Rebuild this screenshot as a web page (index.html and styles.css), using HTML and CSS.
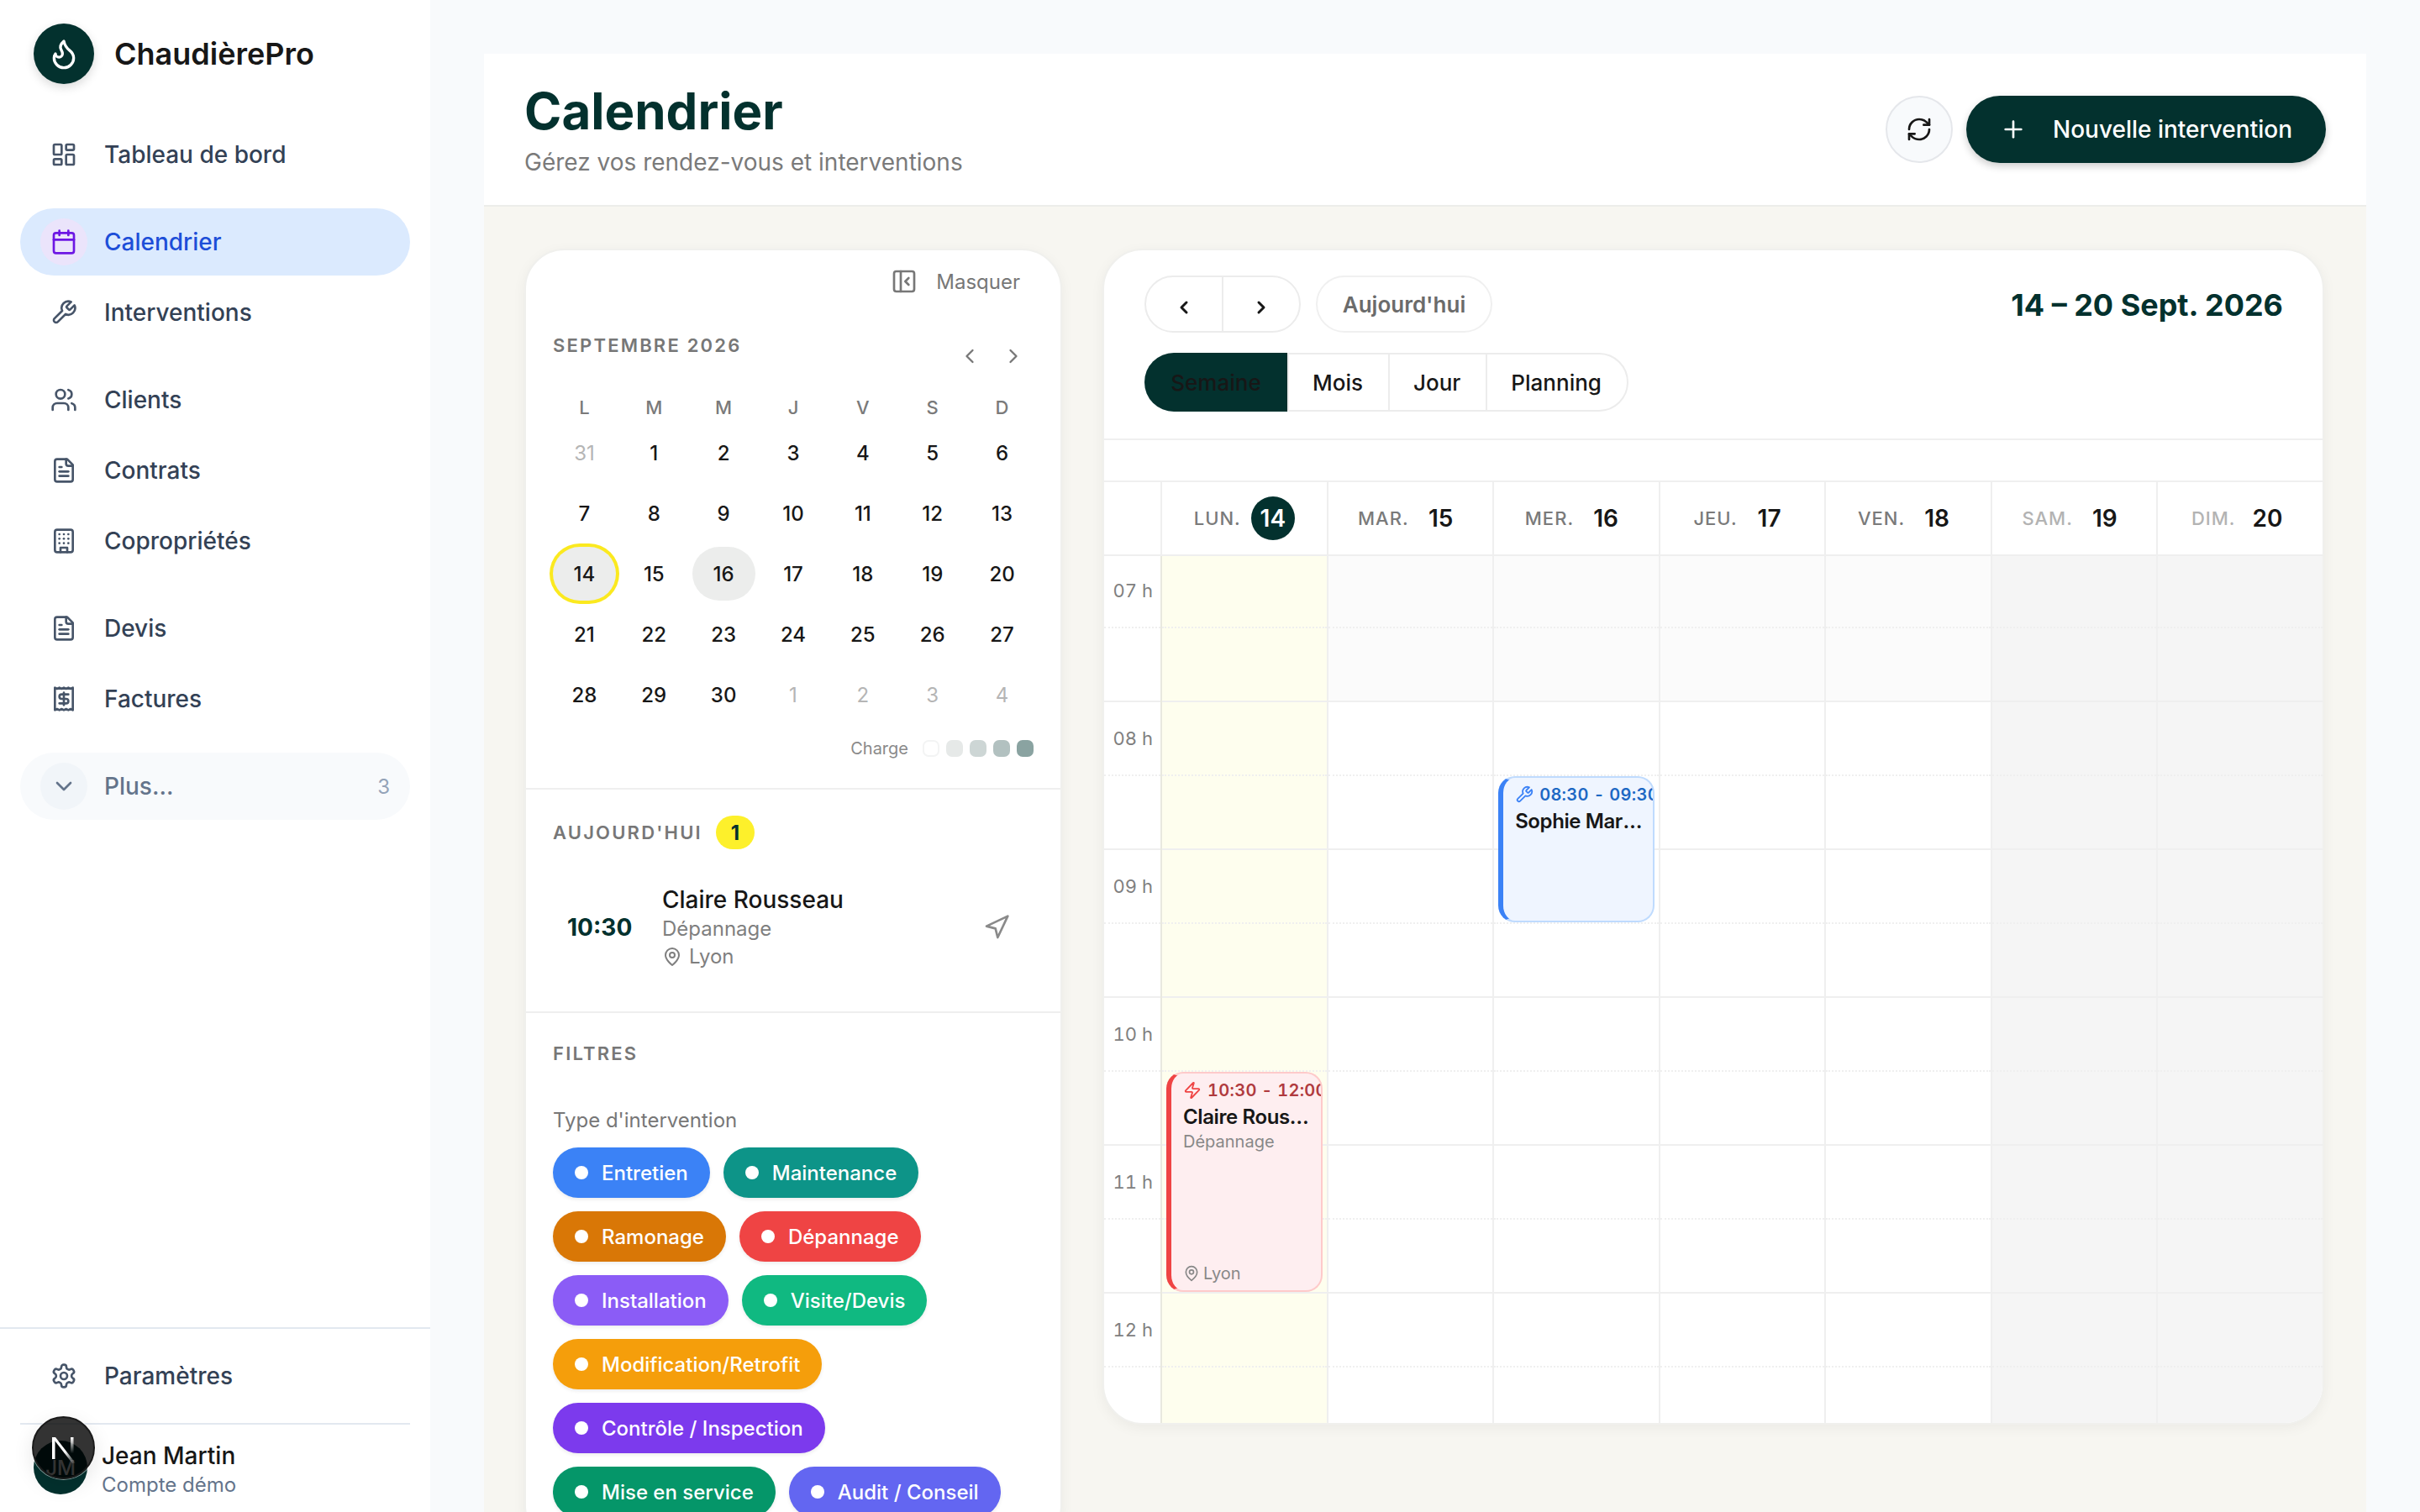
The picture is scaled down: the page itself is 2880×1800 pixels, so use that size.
FILE: index.html
```html
<!DOCTYPE html>
<html lang="fr">
<head>
    <meta charset="UTF-8">
    <title>Calendrier - ChaudièrePro</title>
    <link rel="stylesheet" href="styles.css">
</head>
<body>
    <!-- Icon set -->
    <svg class="sprite" xmlns="http://www.w3.org/2000/svg">
        <symbol id="i-flame" viewBox="0 0 24 24"><path d="M8.5 14.5A2.5 2.5 0 0 0 11 12c0-1.38-.5-2-1-3-1.072-2.143-.224-4.054 2-6 .5 2.5 2 4.9 4 6.5 2 1.6 3 3.5 3 5.5a7 7 0 1 1-14 0c0-1.153.433-2.294 1-3a2.5 2.5 0 0 0 2.5 2.5z"/></symbol>
        <symbol id="i-dashboard" viewBox="0 0 24 24"><rect width="7" height="9" x="3" y="3" rx="1"/><rect width="7" height="5" x="14" y="3" rx="1"/><rect width="7" height="9" x="14" y="12" rx="1"/><rect width="7" height="5" x="3" y="16" rx="1"/></symbol>
        <symbol id="i-calendar" viewBox="0 0 24 24"><path d="M8 2v4"/><path d="M16 2v4"/><rect width="18" height="18" x="3" y="4" rx="2"/><path d="M3 10h18"/></symbol>
        <symbol id="i-wrench" viewBox="0 0 24 24"><path d="M14.7 6.3a1 1 0 0 0 0 1.4l1.6 1.6a1 1 0 0 0 1.4 0l3.77-3.77a6 6 0 0 1-7.94 7.94l-6.91 6.91a2.12 2.12 0 0 1-3-3l6.91-6.91a6 6 0 0 1 7.94-7.94l-3.76 3.76z"/></symbol>
        <symbol id="i-users" viewBox="0 0 24 24"><path d="M16 21v-2a4 4 0 0 0-4-4H6a4 4 0 0 0-4 4v2"/><circle cx="9" cy="7" r="4"/><path d="M22 21v-2a4 4 0 0 0-3-3.87"/><path d="M16 3.13a4 4 0 0 1 0 7.75"/></symbol>
        <symbol id="i-file" viewBox="0 0 24 24"><path d="M15 2H6a2 2 0 0 0-2 2v16a2 2 0 0 0 2 2h12a2 2 0 0 0 2-2V7Z"/><path d="M14 2v4a2 2 0 0 0 2 2h4"/><path d="M10 9H8"/><path d="M16 13H8"/><path d="M16 17H8"/></symbol>
        <symbol id="i-building" viewBox="0 0 24 24"><rect width="16" height="20" x="4" y="2" rx="2"/><path d="M9 22v-4h6v4"/><path d="M8 6h.01"/><path d="M16 6h.01"/><path d="M12 6h.01"/><path d="M12 10h.01"/><path d="M12 14h.01"/><path d="M16 10h.01"/><path d="M16 14h.01"/><path d="M8 10h.01"/><path d="M8 14h.01"/></symbol>
        <symbol id="i-receipt" viewBox="0 0 24 24"><path d="M4 2v20l2-1 2 1 2-1 2 1 2-1 2 1 2-1 2 1V2l-2 1-2-1-2 1-2-1-2 1-2-1-2 1Z"/><path d="M16 8h-6a2 2 0 1 0 0 4h4a2 2 0 1 1 0 4H8"/><path d="M12 17.5v-11"/></symbol>
        <symbol id="i-chevron-down" viewBox="0 0 24 24"><path d="m6 9 6 6 6-6"/></symbol>
        <symbol id="i-chevron-left" viewBox="0 0 24 24"><path d="m15 18-6-6 6-6"/></symbol>
        <symbol id="i-chevron-right" viewBox="0 0 24 24"><path d="m9 18 6-6-6-6"/></symbol>
        <symbol id="i-settings" viewBox="0 0 24 24"><path d="M12.22 2h-.44a2 2 0 0 0-2 2v.18a2 2 0 0 1-1 1.73l-.43.25a2 2 0 0 1-2 0l-.15-.08a2 2 0 0 0-2.73.73l-.22.38a2 2 0 0 0 .73 2.73l.15.1a2 2 0 0 1 1 1.72v.51a2 2 0 0 1-1 1.74l-.15.09a2 2 0 0 0-.73 2.73l.22.38a2 2 0 0 0 2.73.73l.15-.08a2 2 0 0 1 2 0l.43.25a2 2 0 0 1 1 1.73V20a2 2 0 0 0 2 2h.44a2 2 0 0 0 2-2v-.18a2 2 0 0 1 1-1.73l.43-.25a2 2 0 0 1 2 0l.15.08a2 2 0 0 0 2.73-.73l.22-.39a2 2 0 0 0-.73-2.73l-.15-.08a2 2 0 0 1-1-1.74v-.5a2 2 0 0 1 1-1.74l.15-.09a2 2 0 0 0 .73-2.73l-.22-.38a2 2 0 0 0-2.73-.73l-.15.08a2 2 0 0 1-2 0l-.43-.25a2 2 0 0 1-1-1.73V4a2 2 0 0 0-2-2z"/><circle cx="12" cy="12" r="3"/></symbol>
        <symbol id="i-panel" viewBox="0 0 24 24"><rect width="18" height="18" x="3" y="3" rx="2"/><path d="M9 3v18"/><path d="m16 15-3-3 3-3"/></symbol>
        <symbol id="i-refresh" viewBox="0 0 24 24"><path d="M3 12a9 9 0 0 1 9-9 9.75 9.75 0 0 1 6.74 2.74L21 8"/><path d="M21 3v5h-5"/><path d="M21 12a9 9 0 0 1-9 9 9.75 9.75 0 0 1-6.74-2.74L3 16"/><path d="M8 16H3v5"/></symbol>
        <symbol id="i-plus" viewBox="0 0 24 24"><path d="M5 12h14"/><path d="M12 5v14"/></symbol>
        <symbol id="i-pin" viewBox="0 0 24 24"><path d="M20 10c0 6-8 12-8 12s-8-6-8-12a8 8 0 0 1 16 0Z"/><circle cx="12" cy="10" r="3"/></symbol>
        <symbol id="i-navigation" viewBox="0 0 24 24"><polygon points="3 11 22 2 13 21 11 13 3 11"/></symbol>
        <symbol id="i-zap" viewBox="0 0 24 24"><path d="M4 14a1 1 0 0 1-.78-1.63l9.9-10.2a.5.5 0 0 1 .86.46l-1.92 6.02A1 1 0 0 0 13 10h7a1 1 0 0 1 .78 1.63l-9.9 10.2a.5.5 0 0 1-.86-.46l1.92-6.02A1 1 0 0 0 11 14z"/></symbol>
    </svg>

    <aside class="sidebar">
        <div class="brand">
            <span class="brand-logo"><svg class="icon"><use href="#i-flame"/></svg></span>
            <span class="brand-name">ChaudièrePro</span>
        </div>

        <nav class="nav">
            <div class="nav-group">
                <a class="nav-item"><span class="nav-icon"><svg class="icon"><use href="#i-dashboard"/></svg></span>Tableau de bord</a>
            </div>
            <div class="nav-group">
                <a class="nav-item active"><span class="nav-icon"><svg class="icon"><use href="#i-calendar"/></svg></span>Calendrier</a>
                <a class="nav-item"><span class="nav-icon"><svg class="icon"><use href="#i-wrench"/></svg></span>Interventions</a>
            </div>
            <div class="nav-group">
                <a class="nav-item"><span class="nav-icon"><svg class="icon"><use href="#i-users"/></svg></span>Clients</a>
                <a class="nav-item"><span class="nav-icon"><svg class="icon"><use href="#i-file"/></svg></span>Contrats</a>
                <a class="nav-item"><span class="nav-icon"><svg class="icon"><use href="#i-building"/></svg></span>Copropriétés</a>
            </div>
            <div class="nav-group">
                <a class="nav-item"><span class="nav-icon"><svg class="icon"><use href="#i-file"/></svg></span>Devis</a>
                <a class="nav-item"><span class="nav-icon"><svg class="icon"><use href="#i-receipt"/></svg></span>Factures</a>
            </div>
            <div class="nav-group">
                <a class="nav-item more"><span class="nav-icon"><svg class="icon"><use href="#i-chevron-down"/></svg></span>Plus...<span class="more-count">3</span></a>
            </div>
        </nav>

        <div class="sidebar-footer">
            <a class="nav-item"><span class="nav-icon"><svg class="icon"><use href="#i-settings"/></svg></span>Paramètres</a>
            <div class="user">
                <span class="avatar">JM</span>
                <div>
                    <div class="user-name">Jean Martin</div>
                    <div class="user-role">Compte démo</div>
                </div>
            </div>
        </div>
    </aside>

    <!-- Dev indicator sitting over the avatar -->
    <div class="dev-badge">
        <svg width="44" height="44" viewBox="0 0 44 44" fill="none">
            <defs>
                <linearGradient id="fade-a" x1="0" y1="0" x2="1" y2="1"><stop offset="0.55" stop-color="#fff"/><stop offset="1" stop-color="#fff" stop-opacity="0"/></linearGradient>
                <linearGradient id="fade-b" x1="0" y1="0" x2="0" y2="1"><stop offset="0" stop-color="#fff"/><stop offset="0.8" stop-color="#fff" stop-opacity="0"/></linearGradient>
            </defs>
            <rect x="8" y="9" width="3.5" height="26" fill="#fff"/>
            <polygon points="8,9 12,9 36,40 32,40" fill="url(#fade-a)"/>
            <rect x="30" y="9" width="3.5" height="24" fill="url(#fade-b)"/>
        </svg>
    </div>

    <main class="main">
        <header class="page-header">
            <div>
                <h1 class="page-title">Calendrier</h1>
                <p class="page-sub">Gérez vos rendez-vous et interventions</p>
            </div>
            <div class="header-actions">
                <button class="btn-refresh"><svg class="icon"><use href="#i-refresh"/></svg></button>
                <button class="btn-new"><svg class="icon"><use href="#i-plus"/></svg>Nouvelle intervention</button>
            </div>
        </header>

        <div class="page-body">
            <section class="side-panel">
                <div class="panel-section mini-cal">
                    <div class="hide-row"><svg class="icon"><use href="#i-panel"/></svg>Masquer</div>
                    <div class="month-row">
                        <span class="section-label">SEPTEMBRE 2026</span>
                        <span class="month-arrows">
                            <button><svg class="icon"><use href="#i-chevron-left"/></svg></button>
                            <button><svg class="icon"><use href="#i-chevron-right"/></svg></button>
                        </span>
                    </div>
                    <div class="week-letters">
                        <span>L</span><span>M</span><span>M</span><span>J</span><span>V</span><span>S</span><span>D</span>
                    </div>
                    <div class="days">
                        <span class="day off">31</span><span class="day">1</span><span class="day">2</span><span class="day">3</span><span class="day">4</span><span class="day">5</span><span class="day">6</span>
                        <span class="day">7</span><span class="day">8</span><span class="day">9</span><span class="day">10</span><span class="day">11</span><span class="day">12</span><span class="day">13</span>
                        <span class="day today">14</span><span class="day">15</span><span class="day busy">16</span><span class="day">17</span><span class="day">18</span><span class="day">19</span><span class="day">20</span>
                        <span class="day">21</span><span class="day">22</span><span class="day">23</span><span class="day">24</span><span class="day">25</span><span class="day">26</span><span class="day">27</span>
                        <span class="day">28</span><span class="day">29</span><span class="day">30</span><span class="day off">1</span><span class="day off">2</span><span class="day off">3</span><span class="day off">4</span>
                    </div>
                    <div class="legend">
                        <span class="legend-label">Charge</span>
                        <i class="load load-0"></i><i class="load load-1"></i><i class="load load-2"></i><i class="load load-3"></i><i class="load load-4"></i>
                    </div>
                </div>

                <div class="panel-section today-box">
                    <div class="today-head">
                        <span class="section-label">AUJOURD'HUI</span>
                        <span class="today-count">1</span>
                    </div>
                    <div class="today-item">
                        <span class="today-time">10:30</span>
                        <div class="today-info">
                            <div class="today-name">Claire Rousseau</div>
                            <div class="today-type">Dépannage</div>
                            <div class="today-place"><svg class="icon"><use href="#i-pin"/></svg>Lyon</div>
                        </div>
                        <svg class="icon today-go"><use href="#i-navigation"/></svg>
                    </div>
                </div>

                <div class="panel-section filters">
                    <div class="section-label">FILTRES</div>
                    <div class="filter-title">Type d'intervention</div>
                    <div class="pills">
                        <span class="pill entretien">Entretien</span>
                        <span class="pill maintenance">Maintenance</span>
                        <span class="pill ramonage">Ramonage</span>
                        <span class="pill depannage">Dépannage</span>
                        <span class="pill installation">Installation</span>
                        <span class="pill visite">Visite/Devis</span>
                        <span class="pill modification">Modification/Retrofit</span>
                        <span class="pill controle">Contrôle / Inspection</span>
                        <span class="pill service">Mise en service</span>
                        <span class="pill audit">Audit / Conseil</span>
                    </div>
                </div>
            </section>

            <section class="week-panel">
                <div class="toolbar">
                    <div class="toolbar-left">
                        <div class="toolbar-row">
                            <div class="arrows">
                                <button><svg class="icon"><use href="#i-chevron-left"/></svg></button>
                                <button><svg class="icon"><use href="#i-chevron-right"/></svg></button>
                            </div>
                            <button class="btn-today">Aujourd'hui</button>
                        </div>
                        <div class="view-tabs">
                            <button class="tab current">Semaine</button>
                            <button class="tab">Mois</button>
                            <button class="tab">Jour</button>
                            <button class="tab">Planning</button>
                        </div>
                    </div>
                    <div class="range">14 – 20 Sept. 2026</div>
                </div>
                <div class="all-day"></div>

                <div class="week-head">
                    <div class="head-cell"></div>
                    <div class="head-cell"><span class="head-day">LUN.</span><span class="head-num now">14</span></div>
                    <div class="head-cell"><span class="head-day">MAR.</span><span class="head-num">15</span></div>
                    <div class="head-cell"><span class="head-day">MER.</span><span class="head-num">16</span></div>
                    <div class="head-cell"><span class="head-day">JEU.</span><span class="head-num">17</span></div>
                    <div class="head-cell"><span class="head-day">VEN.</span><span class="head-num">18</span></div>
                    <div class="head-cell weekend"><span class="head-day">SAM.</span><span class="head-num">19</span></div>
                    <div class="head-cell weekend"><span class="head-day">DIM.</span><span class="head-num">20</span></div>
                </div>

                <div class="week-body">
                    <div class="hours">
                        <div class="slot hour">07 h</div>
                        <div class="slot hour">08 h</div>
                        <div class="slot hour">09 h</div>
                        <div class="slot hour">10 h</div>
                        <div class="slot hour">11 h</div>
                        <div class="slot hour">12 h</div>
                    </div>

                    <div class="day-col today-col">
                        <div class="slot"></div><div class="slot"></div><div class="slot"></div><div class="slot"></div><div class="slot"></div><div class="slot"></div>
                        <div class="event event-red">
                            <div class="event-time"><svg class="icon"><use href="#i-zap"/></svg>10:30 - 12:00</div>
                            <div class="event-name">Claire Rousseau</div>
                            <div class="event-type">Dépannage</div>
                            <div class="event-place"><svg class="icon"><use href="#i-pin"/></svg>Lyon</div>
                        </div>
                    </div>
                    <div class="day-col">
                        <div class="slot past"></div><div class="slot"></div><div class="slot"></div><div class="slot"></div><div class="slot"></div><div class="slot"></div>
                    </div>
                    <div class="day-col">
                        <div class="slot past"></div><div class="slot"></div><div class="slot"></div><div class="slot"></div><div class="slot"></div><div class="slot"></div>
                        <div class="event event-blue">
                            <div class="event-time"><svg class="icon"><use href="#i-wrench"/></svg>08:30 - 09:30</div>
                            <div class="event-name">Sophie Martin</div>
                        </div>
                    </div>
                    <div class="day-col">
                        <div class="slot past"></div><div class="slot"></div><div class="slot"></div><div class="slot"></div><div class="slot"></div><div class="slot"></div>
                    </div>
                    <div class="day-col">
                        <div class="slot past"></div><div class="slot"></div><div class="slot"></div><div class="slot"></div><div class="slot"></div><div class="slot"></div>
                    </div>
                    <div class="day-col weekend-col">
                        <div class="slot"></div><div class="slot"></div><div class="slot"></div><div class="slot"></div><div class="slot"></div><div class="slot"></div>
                    </div>
                    <div class="day-col weekend-col">
                        <div class="slot"></div><div class="slot"></div><div class="slot"></div><div class="slot"></div><div class="slot"></div><div class="slot"></div>
                    </div>
                </div>
            </section>
        </div>
    </main>
</body>
</html>
```

FILE: styles.css
```css
/* Page frame */
* {
    box-sizing: border-box;
}

body {
    margin: 0;
    height: 100vh;
    display: flex;
    overflow: hidden;
    font-family: 'Inter', 'Liberation Sans', sans-serif;
    color: #171717;
    background-color: #f8fafc;
}

button {
    font-family: inherit;
    background: none;
    border: none;
    padding: 0;
}

.sprite {
    display: none;
}

.icon {
    width: 32px;
    height: 32px;
    flex-shrink: 0;
    fill: none;
    stroke: currentColor;
    stroke-width: 2;
    stroke-linecap: round;
    stroke-linejoin: round;
}

/* Sidebar */
.sidebar {
    width: 512px;
    flex-shrink: 0;
    display: flex;
    flex-direction: column;
    background-color: #fff;
}

.brand {
    height: 144px;
    padding: 28px 0 0 40px;
    display: flex;
    align-items: flex-start;
    gap: 24px;
}

.brand-logo {
    width: 72px;
    height: 72px;
    border-radius: 50%;
    display: flex;
    align-items: center;
    justify-content: center;
    color: #fff;
    background-color: #03312e;
    box-shadow: 0 4px 12px rgba(0, 0, 0, 0.15);
}

.brand-logo .icon {
    width: 40px;
    height: 40px;
}

.brand-name {
    line-height: 72px;
    font-size: 36px;
    font-weight: 600;
    color: #171717;
}

.nav {
    flex: 1;
    padding: 0 24px;
    display: flex;
    flex-direction: column;
    gap: 24px;
}

.nav-group {
    display: flex;
    flex-direction: column;
    gap: 4px;
}

.nav-item {
    height: 80px;
    padding-left: 24px;
    padding-right: 24px;
    display: flex;
    align-items: center;
    gap: 20px;
    border-radius: 40px;
    font-size: 28px;
    font-weight: 500;
    color: #334155;
}

.nav-icon {
    width: 56px;
    height: 56px;
    border-radius: 50%;
    display: flex;
    align-items: center;
    justify-content: center;
    color: #475569;
}

.nav-item.active {
    background-color: #dbeafe;
    color: #1d4ed8;
}

.nav-item.active .nav-icon {
    background-color: #ebe4fb;
    color: #6d16e4;
}

.nav-item.more {
    background-color: #f8fafc;
    color: #64748b;
}

.nav-item.more .nav-icon {
    background-color: #f1f5f9;
    color: #64748b;
}

.more-count {
    margin-left: auto;
    font-size: 24px;
    font-weight: 400;
    color: #94a3b8;
}

.sidebar-footer {
    padding: 16px 24px 0;
    position: relative;
}

.sidebar-footer::before {
    content: "";
    position: absolute;
    left: 0;
    right: 0;
    top: -2px;
    height: 2px;
    background-color: #e2e8f0;
}

.user {
    height: 106px;
    margin-top: 16px;
    padding: 19px 0 0 16px;
    display: flex;
    align-items: flex-start;
    gap: 17px;
    border-top: 2px solid #e2e8f0;
}

.avatar {
    width: 64px;
    height: 64px;
    border-radius: 50%;
    display: flex;
    align-items: center;
    justify-content: center;
    font-size: 24px;
    font-weight: 500;
    color: #fff;
    background-color: #03312e;
}

.user-name {
    line-height: 36px;
    font-size: 28px;
    font-weight: 500;
    color: #171717;
}

.user-role {
    line-height: 34px;
    font-size: 24px;
    color: #64748b;
}

.dev-badge {
    position: absolute;
    left: 38px;
    top: 1686px;
    width: 75px;
    height: 75px;
    border-radius: 50%;
    display: flex;
    align-items: center;
    justify-content: center;
    background-color: rgba(0, 0, 0, 0.8);
    border: 2px solid #1a1a1a;
    box-shadow: 0 0 0 1px rgba(255, 255, 255, 0.5), 0 8px 24px rgba(0, 0, 0, 0.1);
}

/* Main column */
.main {
    flex: 1;
    min-width: 0;
    padding: 64px 64px 0;
    display: flex;
    flex-direction: column;
}

.page-header {
    height: 182px;
    padding: 0 48px;
    display: flex;
    align-items: center;
    justify-content: space-between;
    background-color: #fff;
    border-bottom: 2px solid #ecedea;
}

.page-title {
    margin: 0;
    line-height: 72px;
    font-size: 60px;
    font-weight: 700;
    color: #03312e;
}

.page-sub {
    margin: 6px 0 0;
    line-height: 38px;
    font-size: 28px;
    color: #7a7a7a;
}

.header-actions {
    display: flex;
    gap: 16px;
}

.btn-refresh {
    width: 80px;
    height: 80px;
    border-radius: 50%;
    display: flex;
    align-items: center;
    justify-content: center;
    color: #171717;
    background-color: #f8fafc;
    border: 2px solid #e5e7eb;
}

.btn-new {
    height: 80px;
    padding: 0 40px;
    display: flex;
    align-items: center;
    gap: 31px;
    border-radius: 40px;
    font-size: 28px;
    font-weight: 500;
    color: #fff;
    background-color: #03312e;
    box-shadow: 0 4px 10px rgba(0, 0, 0, 0.2);
}

.page-body {
    flex: 1;
    min-height: 0;
    padding: 50px 50px 0 48px;
    display: flex;
    align-items: flex-start;
    gap: 48px;
    overflow: hidden;
    background-color: #f7f6f1;
}

/* Left panel */
.side-panel {
    width: 640px;
    flex-shrink: 0;
    background-color: #fff;
    border: 2px solid #f0f0ed;
    border-radius: 48px;
    box-shadow: 0 4px 16px rgba(0, 0, 0, 0.05);
}

.panel-section {
    padding: 0 32px;
    border-bottom: 2px solid #efefef;
}

.section-label {
    line-height: 30px;
    font-size: 22px;
    font-weight: 600;
    letter-spacing: 2.2px;
    color: #777;
}

.mini-cal {
    padding-top: 18px;
    padding-bottom: 37px;
}

.hide-row {
    height: 38px;
    padding-right: 16px;
    display: flex;
    align-items: center;
    justify-content: flex-end;
    gap: 22px;
    font-size: 24px;
    color: #777;
}

.month-row {
    height: 56px;
    margin-top: 42px;
    display: flex;
    justify-content: space-between;
    align-items: flex-start;
}

.month-arrows {
    margin-right: -2px;
    display: flex;
}

.month-arrows button {
    width: 52px;
    height: 40px;
    margin-top: 8px;
    display: flex;
    align-items: center;
    justify-content: center;
    color: #777;
}

.month-arrows .icon {
    width: 28px;
    height: 28px;
}

.week-letters,
.days {
    display: grid;
    grid-template-columns: repeat(7, 1fr);
    column-gap: 8px;
}

.week-letters {
    margin-top: 18px;
    line-height: 30px;
    text-align: center;
    font-size: 22px;
    font-weight: 500;
    color: #7a7a7a;
}

.days {
    margin-top: 7px;
    row-gap: 8px;
}

.day {
    height: 64px;
    border-radius: 32px;
    display: flex;
    align-items: center;
    justify-content: center;
    font-size: 24px;
    font-weight: 500;
    color: #171717;
}

.day.off {
    font-weight: 400;
    color: #b5b5b5;
}

.day.busy,
.day.today {
    background-color: #ecedec;
}

.day.today {
    box-shadow: 0 0 0 4px #fbe91f;
}

.legend {
    height: 20px;
    margin-top: 22px;
    display: flex;
    align-items: center;
    justify-content: flex-end;
    gap: 8px;
}

.legend-label {
    margin-right: 9px;
    font-size: 20px;
    color: #8a8a8a;
}

.load {
    width: 20px;
    height: 20px;
    border-radius: 7px;
}

.load-0 {
    border: 2px solid #f3f4f4;
}

.load-1 {
    background-color: #e6e9e8;
}

.load-2 {
    background-color: #cdd6d5;
}

.load-3 {
    background-color: #b2c1c0;
}

.load-4 {
    background-color: #8aa3a1;
}

/* Today list */
.today-box {
    padding-top: 31px;
    padding-bottom: 48px;
}

.today-head {
    height: 40px;
    display: flex;
    align-items: center;
    gap: 16px;
}

.today-count {
    width: 46px;
    height: 40px;
    border-radius: 20px;
    display: flex;
    align-items: center;
    justify-content: center;
    font-size: 24px;
    font-weight: 700;
    color: #03312e;
    background-color: #fdf02b;
}

.today-item {
    margin-top: 41px;
    padding: 0 28px 0 17px;
    display: flex;
    align-items: center;
}

.today-time {
    width: 113px;
    flex-shrink: 0;
    font-size: 28px;
    font-weight: 700;
    color: #03312e;
}

.today-info {
    flex: 1;
}

.today-name {
    line-height: 38px;
    font-size: 28px;
    font-weight: 500;
    color: #171717;
}

.today-type {
    line-height: 32px;
    font-size: 24px;
    color: #7f7f7f;
}

.today-place {
    line-height: 34px;
    display: flex;
    align-items: center;
    gap: 8px;
    font-size: 24px;
    color: #7f7f7f;
}

.today-place .icon {
    width: 24px;
    height: 24px;
}

.today-go {
    color: #8a8a8a;
}

/* Filters */
.filters {
    padding-top: 33px;
    padding-bottom: 32px;
    border-bottom: none;
}

.filter-title {
    margin-top: 47px;
    line-height: 36px;
    font-size: 24px;
    color: #777;
}

.pills {
    margin-top: 14px;
    display: flex;
    flex-wrap: wrap;
    gap: 16px;
}

.pill {
    height: 60px;
    padding: 0 26px;
    display: flex;
    align-items: center;
    gap: 16px;
    border-radius: 30px;
    font-size: 24px;
    font-weight: 500;
    color: #fff;
    box-shadow: 0 2px 4px rgba(0, 0, 0, 0.08);
}

.pill::before {
    content: "";
    width: 16px;
    height: 16px;
    border-radius: 50%;
    background-color: #fff;
}

.entretien { background-color: #3b82f6; }
.maintenance { background-color: #0d9488; }
.ramonage { background-color: #d97706; }
.depannage { background-color: #ef4444; }
.installation { background-color: #8b5cf6; }
.visite { background-color: #10b981; }
.modification { background-color: #f59e0b; }
.controle { background-color: #7c3aed; }
.service { background-color: #059669; }
.audit { background-color: #6366f1; }

/* Week panel */
.week-panel {
    flex: 1;
    min-width: 0;
    height: 1400px;
    display: flex;
    flex-direction: column;
    overflow: hidden;
    background-color: #fff;
    border: 2px solid #f0f0ed;
    border-radius: 48px;
    box-shadow: 0 4px 16px rgba(0, 0, 0, 0.05);
}

.toolbar {
    height: 226px;
    padding: 30px 47px 0 48px;
    display: flex;
    justify-content: space-between;
    border-bottom: 2px solid #efefef;
}

.toolbar-row {
    display: flex;
    gap: 18px;
}

.arrows {
    width: 186px;
    height: 68px;
    display: flex;
    border: 2px solid #ececec;
    border-radius: 34px;
}

.arrows button {
    flex: 1;
    padding-top: 10px;
    color: #171717;
}

.arrows button + button {
    border-left: 2px solid #ececec;
}

.arrows .icon {
    width: 24px;
    height: 24px;
    stroke-width: 3;
}

.btn-today {
    width: 210px;
    height: 68px;
    border: 2px solid #f0f0f0;
    border-radius: 34px;
    font-size: 26px;
    font-weight: 600;
    color: #6b6b6b;
}

.view-tabs {
    margin-top: 24px;
    display: flex;
    height: 70px;
    border: 2px solid #ececec;
    border-radius: 35px;
}

.tab {
    padding: 0 30px 0 28px;
    font-size: 26px;
    font-weight: 500;
    color: #171717;
}

.tab + .tab {
    border-left: 2px solid #ececec;
}

/* semaine: dark label on the dark fill, same as the reference */
.tab.current {
    width: 170px;
    margin: -2px 0 -2px -2px;
    padding: 0;
    border-radius: 35px 0 0 35px;
    background-color: #03312e;
}

.range {
    margin-top: 15px;
    font-size: 36px;
    line-height: 40px;
    font-weight: 700;
    color: #03312e;
}

.all-day {
    height: 48px;
    flex-shrink: 0;
}

.week-head,
.week-body {
    display: grid;
    grid-template-columns: 67px repeat(7, 1fr);
}

.week-head {
    height: 90px;
    flex-shrink: 0;
    position: relative;
    z-index: 1;
    background-color: #fff;
    border-top: 2px solid #efefef;
    border-bottom: 2px solid #efefef;
}

.head-cell {
    display: flex;
    align-items: center;
    justify-content: center;
    gap: 12px;
    border-left: 2px solid #efefef;
}

.head-cell:first-child {
    border-left: none;
}

.head-day {
    font-size: 22px;
    font-weight: 500;
    letter-spacing: 1px;
    color: #7a7a7a;
}

.head-num {
    width: 52px;
    height: 52px;
    border-radius: 50%;
    display: flex;
    align-items: center;
    justify-content: center;
    font-size: 28px;
    font-weight: 600;
    color: #171717;
}

.head-num.now {
    color: #fff;
    background-color: #03312e;
}

.weekend .head-day {
    color: #b3b3b3;
}

.week-body {
    flex: 1;
    min-height: 0;
    margin-top: -2px;
    overflow: hidden;
}

.day-col {
    position: relative;
    border-left: 2px solid #efefef;
}

.slot {
    height: 176px;
    position: relative;
    border-bottom: 2px solid #efefef;
}

.slot::after {
    content: "";
    position: absolute;
    left: 0;
    right: 0;
    top: 86px;
    border-top: 2px dotted #efefef;
}

.slot.past {
    background-color: #fbfbfb;
}

.hour {
    padding: 28px 9px 0 0;
    line-height: 30px;
    text-align: right;
    font-size: 22px;
    font-variant-numeric: tabular-nums;
    color: #808080;
}

.today-col {
    background-color: #fefeee;
    border-left-color: #e9e9df;
}

.weekend-col {
    background-color: #f5f5f5;
}

/* Events */
.event {
    position: absolute;
    left: 5px;
    right: 5px;
    padding: 6px 8px 0 14px;
    overflow: hidden;
    border: 2px solid;
    border-left-width: 6px;
    border-radius: 20px;
}

.event-blue {
    top: 264px;
    height: 174px;
    background-color: #eff5ff;
    border-color: #bfdbfe;
    border-left-color: #3b82f6;
}

.event-red {
    top: 616px;
    height: 262px;
    background-color: #feeef0;
    border-color: #fecaca;
    border-left-color: #ef4444;
}

.event-time {
    height: 28px;
    display: flex;
    align-items: center;
    gap: 7px;
    white-space: nowrap;
    font-size: 20px;
    font-weight: 600;
    font-variant-numeric: tabular-nums;
    letter-spacing: 0.3px;
}

.event-time .icon {
    width: 22px;
    height: 22px;
}

.event-blue .event-time {
    color: #1d68c4;
}

.event-blue .event-time .icon {
    color: #3b82f6;
}

.event-red .event-time {
    color: #b03a3e;
}

.event-red .event-time .icon {
    color: #ef4444;
}

.event-name {
    margin-top: 2px;
    line-height: 32px;
    overflow: hidden;
    white-space: nowrap;
    text-overflow: ellipsis;
    font-size: 24px;
    font-weight: 600;
    letter-spacing: -0.4px;
    color: #171717;
}

.event-type {
    line-height: 26px;
    font-size: 20px;
    color: #888;
}

.event-place {
    position: absolute;
    left: 14px;
    bottom: 8px;
    display: flex;
    align-items: center;
    gap: 4px;
    font-size: 20px;
    color: #888;
}

.event-place .icon {
    width: 20px;
    height: 20px;
}
```
